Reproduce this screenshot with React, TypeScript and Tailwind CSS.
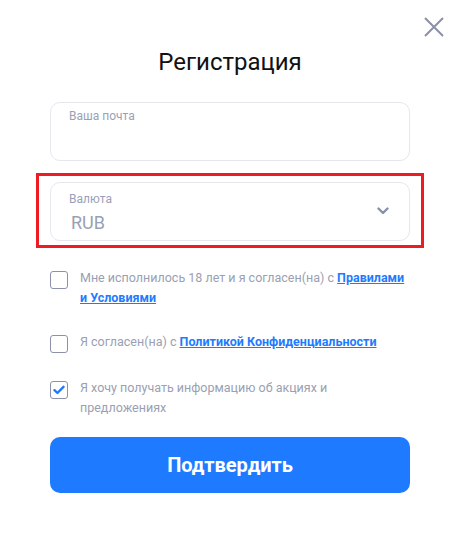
import * as React from 'react';

function Checkbox({ checked }: { checked?: boolean }) {
  return (
    <span className="mt-[3px] flex h-[18px] w-[18px] shrink-0 items-center justify-center rounded-[3px] border-[1.5px] border-[#8c92aa] bg-white">
      {checked && (
        <svg width="12" height="10" viewBox="0 0 12 10" fill="none">
          <path d="M1.5 5.2 4.4 8 10.5 1.8" stroke="#1e7bff" strokeWidth="2.4" strokeLinecap="round" strokeLinejoin="round" />
        </svg>
      )}
    </span>
  );
}

function Row({ checked, children }: { checked?: boolean; children: React.ReactNode }) {
  return (
    <label className="flex items-start gap-[12px]">
      <Checkbox checked={checked} />
      <span className="text-[12.5px] leading-[20px] text-[#9a9fb3]">{children}</span>
    </label>
  );
}

export default function App() {
  return (
    <div
      className="relative h-[534px] w-[460px] bg-white"
      style={{ fontFamily: 'Roboto, "Liberation Sans", sans-serif' }}
    >
      <button type="button" aria-label="Close" className="absolute right-[15px] top-[16px] p-[1px]">
        <svg width="20" height="20" viewBox="0 0 20 20" fill="none">
          <path d="M1 1 19 19M19 1 1 19" stroke="#8a90a8" strokeWidth="2" />
        </svg>
      </button>

      <div className="flex flex-col px-[50px] pt-[47px]">
        <h2 className="text-center text-[24px] font-normal leading-[30px] text-[#111]">Регистрация</h2>

        <div className="mt-[25px] flex h-[59px] flex-col rounded-[10px] border border-[#e6e7ee] px-[18px] pt-[5px]">
          <span className="text-[12px] leading-[16px] text-[#9a9fb8]">Ваша почта</span>
        </div>

        <div className="-mx-[14px] mt-[12px] border-[3px] border-[#ec1c24] px-[11px] pb-[4px] pt-[6px]">
          <div className="flex h-[59px] items-center rounded-[10px] border border-[#e6e7ee] pl-[18px] pr-[20px]">
            <div className="flex flex-1 flex-col pt-[2px]">
              <span className="text-[12px] leading-[16px] text-[#9a9fb8]">Валюта</span>
              <span className="ml-[2px] mt-[5px] text-[18px] leading-[22px] text-[#9a9fb4]">RUB</span>
            </div>
            <svg width="12" height="8" viewBox="0 0 12 8" fill="none" className="mb-[2px]">
              <path d="M1.5 1.5 6 6l4.5-4.5" stroke="#8a90a8" strokeWidth="2.4" strokeLinecap="round" strokeLinejoin="round" />
            </svg>
          </div>
        </div>

        <div className="mt-[20px] flex flex-col">
          <Row>
            Мне исполнилось 18 лет и я согласен(на) с{' '}
            <a className="font-bold text-[#1e7bff] underline">Правилами и Условиями</a>
          </Row>
          <div className="mt-[24px]">
            <Row>
              Я согласен(на) с{' '}
              <a className="font-bold text-[#1e7bff] underline">Политикой Конфиденциальности</a>
            </Row>
          </div>
          <div className="mt-[25px]">
            <Row checked>Я хочу получать информацию об акциях и предложениях</Row>
          </div>
        </div>

        <button
          type="button"
          className="mt-[19px] h-[56px] rounded-[10px] bg-[#1e7bff] text-[20px] font-bold text-white"
        >
          Подтвердить
        </button>
      </div>
    </div>
  );
}
